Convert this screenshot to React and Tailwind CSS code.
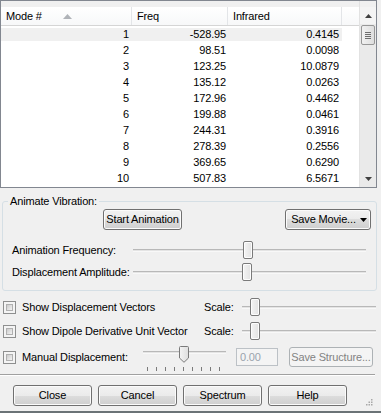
import React from "react";

const rows = [
  [1, "-528.95", "0.4145"],
  [2, "98.51", "0.0098"],
  [3, "123.25", "10.0879"],
  [4, "135.12", "0.0263"],
  [5, "172.96", "0.4462"],
  [6, "199.88", "0.0461"],
  [7, "244.31", "0.3916"],
  [8, "278.39", "0.2556"],
  [9, "369.65", "0.6290"],
  [10, "507.83", "6.5671"],
];

const btn =
  "h-[21px] rounded-[3px] border border-[#707070] bg-[linear-gradient(#f2f2f2_0%,#ebebeb_50%,#dddddd_50%,#cfcfcf_100%)] shadow-[inset_0_0_0_1px_#fbfbfb] flex items-center justify-center text-black";

function Thumb() {
  return (
    <div className="w-[10px] h-[18px] rounded-[2px] border border-[#7a7a7a] bg-[linear-gradient(90deg,#f4f4f4,#e2e2e2)] shadow-[inset_0_0_0_1px_#fdfdfd]" />
  );
}

function Track({ pos }) {
  return (
    <div className="relative flex-1 h-[18px] flex items-center">
      <div className="w-full h-[3px] border-t border-[#b8b8b8] bg-[#e4e4e4] border-b border-b-[#f8f8f8]" />
      <div className={"absolute top-0 " + pos}>
        <Thumb />
      </div>
    </div>
  );
}

function Check() {
  return (
    <div className="w-[13px] h-[13px] border border-[#8e8f8f] bg-[#f4f4f4] p-[2px] shrink-0">
      <div className="w-full h-full border border-[#b0b0b0] bg-[linear-gradient(135deg,#cbcbcb,#f3f3f3)]" />
    </div>
  );
}

function Tri({ up, color = "#404040" }) {
  return (
    <svg width="7" height="4" viewBox="0 0 7 4">
      <polygon points={up ? "3.5,0 7,4 0,4" : "0,0 7,0 3.5,4"} fill={color} />
    </svg>
  );
}

export default function App() {
  return (
    <div
      className="w-[381px] h-[413px] bg-[#f0f0f0] flex flex-col text-[11px] leading-[13px] tracking-[-0.15px] text-black border-b-2 border-[#6b7376] overflow-hidden"
      style={{ fontFamily: '"Liberation Sans", Arial, sans-serif' }}
    >
      {/* list */}
      <div className="w-[377px] h-[188px] border border-[#828790] bg-white flex shrink-0">
        <div className="flex-1 flex flex-col">
          <div className="h-[6px] bg-[#f0f0f0]" />
          <div className="h-[19px] flex border-b border-[#d5d5d5] bg-[linear-gradient(#ffffff,#f7f8f9)]">
            <div className="w-[131px] border-r border-[#e3e5e8] flex items-center pl-[5px]">
              <span>Mode #</span>
              <svg width="9" height="5" viewBox="0 0 9 5" className="ml-[21px]">
                <polygon points="4.5,0 9,5 0,5" fill="#b0b3b8" />
              </svg>
            </div>
            <div className="w-[96px] border-r border-[#e3e5e8] flex items-center pl-[5px]">Freq</div>
            <div className="w-[114px] border-r border-[#e3e5e8] flex items-center pl-[5px]">Infrared</div>
            <div className="flex-1" />
          </div>
          {rows.map(([m, f, ir]) => (
            <div key={m} className="h-[16px] flex items-center">
              <div className={"flex " + (m === 1 ? "bg-[#f0f0f0]" : "")}>
                <div className="w-[131px] text-right pr-[3px]">{m}</div>
                <div className="w-[96px] text-right pr-[2px]">{f}</div>
                <div className="w-[114px] text-right pr-[3px]">{ir}</div>
              </div>
            </div>
          ))}
        </div>
        {/* scrollbar */}
        <div className="w-[17px] flex flex-col bg-[#eaeaea] border-l border-[#e2e2e2]">
          <div className="h-[6px] bg-[#f0f0f0]" />
          <div className="h-[17px] flex items-center justify-center bg-[#f4f4f4]">
            <Tri up />
          </div>
          <div className="h-[20px] mt-[1px] mx-[1px] rounded-[2px] border border-[#979797] bg-[linear-gradient(90deg,#f1f1f1,#dedede)] flex flex-col items-center justify-center gap-[1px]">
            <div className="w-[6px] h-[1px] bg-[#6d6d6d]" />
            <div className="w-[6px] h-[1px] bg-[#6d6d6d]" />
            <div className="w-[6px] h-[1px] bg-[#6d6d6d]" />
            <div className="w-[6px] h-[1px] bg-[#6d6d6d]" />
          </div>
          <div className="flex-1" />
          <div className="h-[17px] flex items-center justify-center">
            <Tri />
          </div>
        </div>
      </div>

      {/* animate vibration group */}
      <fieldset className="ml-[2px] mr-[4px] mt-[7px] border border-[#d5dfe5] rounded-[3px] pb-[7px] shrink-0">
        <legend className="ml-[5px] px-[2px]">Animate Vibration:</legend>
        <div className="flex justify-between pl-[100px] pr-[5px] mt-[1px]">
          <div className={btn + " w-[79px]"}>Start Animation</div>
          <div className={btn + " w-[86px] gap-[4px] pl-[2px]"}>
            <span>Save Movie...</span>
            <svg width="7" height="4" viewBox="0 0 7 4">
              <polygon points="0,0 7,0 3.5,4" fill="#000" />
            </svg>
          </div>
        </div>
        <div className="flex items-center h-[22px] mt-[9px] pl-[9px] pr-[10px]">
          <div className="w-[121px]">Animation Frequency:</div>
          <Track pos="left-[110px]" />
        </div>
        <div className="flex items-center h-[22px] pl-[9px] pr-[10px]">
          <div className="w-[121px]">Displacement Amplitude:</div>
          <Track pos="left-[109px]" />
        </div>
      </fieldset>

      {/* checkbox rows */}
      <div className="flex items-center h-[20px] mt-[6px] pl-[3px] pr-[5px]">
        <Check />
        <div className="w-[182px] ml-[6px]">Show Displacement Vectors</div>
        <div className="w-[38px]">Scale:</div>
        <Track pos="left-[8px]" />
      </div>
      <div className="flex items-center h-[20px] mt-[4px] pl-[3px] pr-[5px]">
        <Check />
        <div className="w-[182px] ml-[6px]">Show Dipole Derivative Unit Vector</div>
        <div className="w-[38px]">Scale:</div>
        <Track pos="left-[8px]" />
      </div>
      <div className="flex items-center h-[26px] mt-[3px] pl-[3px]">
        <Check />
        <div className="w-[121px] ml-[6px]">Manual Displacement:</div>
        <div className="relative w-[83px] h-[26px]">
          <div className="absolute left-0 right-0 top-[7px] h-[3px] border-t border-[#b8b8b8] bg-[#e4e4e4] border-b border-b-[#f8f8f8]" />
          <svg width="10" height="17" viewBox="0 0 10 17" className="absolute left-[36px] top-[2px]">
            <defs>
              <linearGradient id="tg" x1="0" x2="1">
                <stop offset="0" stopColor="#f4f4f4" />
                <stop offset="1" stopColor="#dedede" />
              </linearGradient>
            </defs>
            <path d="M1.5 0.5 H8.5 Q9.5 0.5 9.5 1.5 V12 L5 16.3 L0.5 12 V1.5 Q0.5 0.5 1.5 0.5 Z" fill="url(#tg)" stroke="#7a7a7a" />
          </svg>
          <div className="absolute left-[4px] top-[23px] flex gap-[8px]">
            {[0, 1, 2, 3, 4, 5, 6, 7, 8].map((i) => (
              <div key={i} className="w-[1px] h-[4px] bg-[#7a7a7a]" />
            ))}
          </div>
        </div>
        <div className="ml-[10px] w-[42px] h-[18px] border border-[#bcc1c6] bg-[#f4f4f4] flex items-center pl-[3px] text-[#9aa3ad]">
          0.00
        </div>
        <div className="ml-[11px] w-[84px] h-[20px] rounded-[3px] border border-[#adb2b5] bg-[#f4f4f4] flex items-center justify-center text-[#838383]">
          Save Structure...
        </div>
      </div>

      {/* separator */}
      <div className="mt-[4px] mr-[6px] h-[1px] bg-[#a0a0a0]" />
      <div className="mr-[6px] h-[1px] bg-white" />

      {/* bottom buttons */}
      <div className="flex items-end mt-[9px] pl-[13px] pr-[8px] gap-[6px] h-[21px]">
        <div className={btn + " w-[79px]"}>Close</div>
        <div className={btn + " w-[79px]"}>Cancel</div>
        <div className={btn + " w-[79px]"}>Spectrum</div>
        <div className={btn + " w-[79px]"}>Help</div>
        <svg width="7" height="7" viewBox="0 0 7 7" className="ml-auto mb-[0px]">
          {[
            [5, 0],
            [5, 2.5],
            [2.5, 2.5],
            [5, 5],
            [2.5, 5],
            [0, 5],
          ].map(([x, y], i) => (
            <rect key={i} x={x} y={y} width="1.5" height="1.5" fill="#a8a8a8" />
          ))}
        </svg>
      </div>
    </div>
  );
}
